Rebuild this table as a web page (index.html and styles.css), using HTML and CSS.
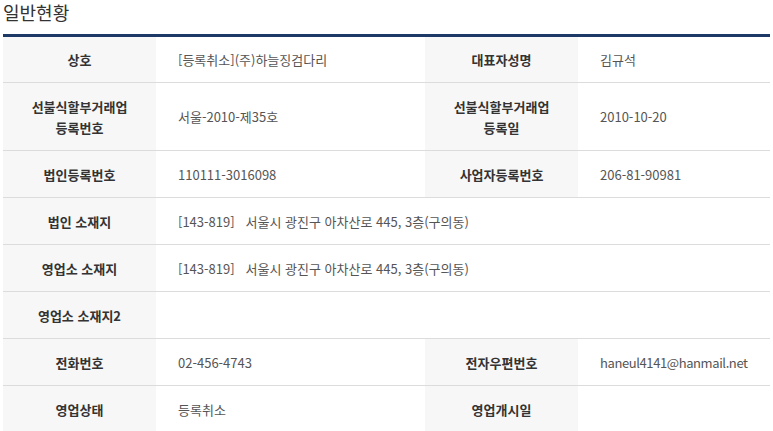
FILE: index.html
```html
<!DOCTYPE html>
<html lang="ko">
<head>
<meta charset="utf-8">
<link rel="stylesheet" href="styles.css">
</head>
<body>
<div class="wrap">
  <h2 class="title">일반현황</h2>
  <table class="info">
    <colgroup>
      <col class="c-th"><col class="c-td1"><col class="c-th"><col class="c-td2">
    </colgroup>
    <tbody>
      <tr class="r1">
        <th>상호</th><td>[등록취소](주)하늘징검다리</td>
        <th>대표자성명</th><td>김규석</td>
      </tr>
      <tr class="r2">
        <th>선불식할부거래업<br>등록번호</th><td>서울-2010-제35호</td>
        <th>선불식할부거래업<br>등록일</th><td>2010-10-20</td>
      </tr>
      <tr>
        <th>법인등록번호</th><td>110111-3016098</td>
        <th>사업자등록번호</th><td>206-81-90981</td>
      </tr>
      <tr>
        <th>법인 소재지</th><td colspan="3">[143-819]&nbsp;&nbsp; 서울시 광진구 아차산로 445, 3층(구의동)</td>
      </tr>
      <tr>
        <th>영업소 소재지</th><td colspan="3">[143-819]&nbsp;&nbsp; 서울시 광진구 아차산로 445, 3층(구의동)</td>
      </tr>
      <tr>
        <th>영업소 소재지2</th><td colspan="3"></td>
      </tr>
      <tr>
        <th>전화번호</th><td>02-456-4743</td>
        <th>전자우편번호</th><td class="email">haneul4141@hanmail.net</td>
      </tr>
      <tr>
        <th>영업상태</th><td>등록취소</td>
        <th>영업개시일</th><td></td>
      </tr>
    </tbody>
  </table>
</div>
</body>
</html>
```

FILE: styles.css
```css
html, body {
  margin: 0;
  padding: 0;
  background: #fff;
}
body {
  font-family: "Noto Sans CJK KR", "Noto Sans", sans-serif;
  color: #444;
}
.wrap {
  padding: 0 3px;
}
.title {
  margin: 0;
  padding: 0;
  height: 34px;
  line-height: 24px;
  font-size: 18px;
  font-weight: normal;
  color: #333;
}
.info {
  width: 767px;
  table-layout: fixed;
  border-collapse: collapse;
  border-top: 3px solid #1d3a67;
  font-size: 13px;
}
.c-th { width: 153px; }
.c-td1 { width: 269px; }
.c-td2 { width: 192px; }
.info th,
.info td {
  height: 46px;
  padding: 0;
  line-height: 21px;
  border-bottom: 1px solid #dcdcdc;
  vertical-align: middle;
}
.info .r1 th, .info .r1 td { height: 45px; }
.info .r2 th, .info .r2 td { height: 67px; }
.info th {
  background: #f7f7f7;
  color: #333;
  font-weight: 600;
  text-align: center;
}
.info td {
  padding-left: 22px;
  text-align: left;
  color: #555;
}
.info .email {
  letter-spacing: -0.4px;
}
```
